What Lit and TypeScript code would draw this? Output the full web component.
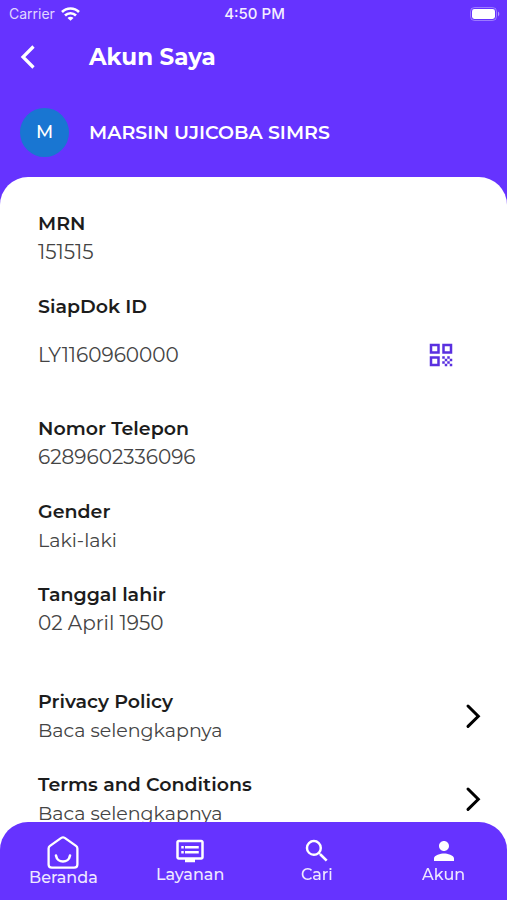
import { LitElement, html, css, svg, nothing } from "lit";
import { customElement, property } from "lit/decorators.js";

const icons = {
  back: svg`<svg class="icon" width="16" height="26" viewBox="0 0 16 26" fill="none" stroke="currentColor" stroke-width="3.2" stroke-linejoin="miter"><path d="M13.5 2.5 3 13l10.500 10.500"/></svg>`,
  next: svg`<svg class="icon" width="16" height="26" viewBox="0 0 16 26" fill="none" stroke="currentColor" stroke-width="3" stroke-linecap="round" stroke-linejoin="miter"><path d="M3 3l10.300 10.200L3 23.400"/></svg>`,
  wifi: svg`<svg class="icon" width="19" height="14" viewBox="0 0 19 14" fill="none" stroke="currentColor" stroke-width="2.6"><path d="M1 5a12 12 0 0 1 17 0"/><path d="M4 8.500a7.800 7.800 0 0 1 11 0"/><path d="M9.500 13.800 6.500 10.900a4.200 4.200 0 0 1 6 0z" fill="currentColor" stroke="none"/></svg>`,
  battery: svg`<svg class="icon" width="30" height="14" viewBox="0 0 30 14"><rect x="0.5" y="0.5" width="26" height="13" rx="4" fill="none" stroke="#fff" stroke-opacity=".35"/><rect x="2" y="2" width="23" height="10" rx="2.4" fill="#fff"/><path d="M28 4.600c1.800.9 1.800 3.900 0 4.800z" fill="#fff" fill-opacity=".5"/></svg>`,
  qr: svg`<svg class="icon" width="30" height="30" viewBox="0 0 24 24" fill="currentColor"><path d="M3 11h8V3H3v8zm2-6h4v4H5V5zM3 21h8v-8H3v8zm2-6h4v4H5v-4zM13 3v8h8V3h-8zm6 6h-4V5h4v4zM19 19h2v2h-2zM13 13h2v2h-2zM15 15h2v2h-2zM13 17h2v2h-2zM15 19h2v2h-2zM17 17h2v2h-2zM17 13h2v2h-2zM19 15h2v2h-2z"/></svg>`,
  home: svg`<svg class="icon" width="32" height="33" viewBox="0 0 32 34" preserveAspectRatio="none" fill="none" stroke="currentColor" stroke-width="2.3" stroke-linecap="round" stroke-linejoin="round"><path d="M14.300 1.900 3 10.200Q1.600 11.300 1.600 13v16.400q0 3.200 3.200 3.200h22.400q3.200 0 3.200-3.200V13q0-1.700-1.400-2.800L17.700 1.900q-1.700-1.100-3.400 0z"/><path d="M9 20.200c1.400 8.200 12.600 8.200 14 0" stroke-width="2.6"/></svg>`,
  service: svg`<svg class="icon" width="30" height="30" viewBox="0 0 24 24" fill="currentColor"><path d="M21 3H3c-1.100 0-2 .9-2 2v12c0 1.100.9 2 2 2h5v2h8v-2h5c1.100 0 2-.9 2-2V5c0-1.100-.9-2-2-2zm0 14H3V5h18v12zm-2-9H8v2h11V8zm0 4H8v2h11v-2zM7 8H5v2h2V8zm0 4H5v2h2v-2z"/></svg>`,
  search: svg`<svg class="icon" width="30" height="30" viewBox="0 0 24 24" fill="currentColor"><path d="M15.500 14h-.79l-.28-.27A6.471 6.471 0 0 0 16 9.500 6.500 6.500 0 1 0 9.500 16c1.610 0 3.090-.59 4.230-1.570l.27.28v.79l5 4.990L20.490 19l-4.990-5zm-6 0C7.010 14 5 11.990 5 9.500S7.010 5 9.500 5 14 7.010 14 9.500 11.990 14 9.500 14z"/></svg>`,
  person: svg`<svg class="icon" width="30" height="30" viewBox="0 0 24 24" fill="currentColor"><path d="M12 12c2.210 0 4-1.790 4-4s-1.790-4-4-4-4 1.790-4 4 1.790 4 4 4zm0 2c-2.670 0-8 1.340-8 4v2h16v-2c0-2.660-5.330-4-8-4z"/></svg>`,
};

const base = css`
  * { box-sizing: border-box; }
  .icon { display: block; flex: none; }
  button { border: 0; padding: 0; background: none; font: inherit; color: inherit; cursor: pointer; }
  a { color: inherit; text-decoration: none; }
`;

@customElement("status-bar")
class StatusBar extends LitElement {
  static styles = [base, css`
    :host {
      display: grid; grid-template-columns: 1fr auto 1fr; align-items: center;
      height: 27px; padding: 0 7px 0 9px;
      font-family: Inter, "Liberation Sans", sans-serif; font-size: 14px; line-height: 20px;
    }
    .carrier { display: flex; align-items: center; gap: 6px; color: #e0d6ff; }
    .carrier .icon { color: #fff; }
    .time { font-size: 15px; font-weight: 500; color: #f4eeff; }
    .power { justify-self: end; }
  `];
  render() {
    return html`
      <span class="carrier">Carrier ${icons.wifi}</span>
      <span class="time">4:50 PM</span>
      <span class="power">${icons.battery}</span>`;
  }
}

@customElement("profile-field")
class ProfileField extends LitElement {
  @property() label = "";
  @property() value = "";
  @property({ type: Boolean }) qr = false;
  static styles = [base, css`
    :host { display: block; }
    dl, dd { margin: 0; }
    dt { font-weight: 600; color: #1c1c1c; }
    dd { color: #444; }
    .numeric { font-size: 20px; }
    .tall { display: flex; align-items: center; justify-content: space-between; height: 68px; padding-right: 25px; }
    .code { color: #5a30e0; }
  `];
  render() {
    const size = /\d/.test(this.value) ? "numeric" : "";
    return html`<dl>
      <dt>${this.label}</dt>
      <dd class="${size} ${this.qr ? "tall" : ""}">
        <span>${this.value}</span>
        ${this.qr ? html`<button class="code" aria-label="QR">${icons.qr}</button>` : nothing}
      </dd>
    </dl>`;
  }
}

@customElement("profile-link")
class ProfileLink extends LitElement {
  @property() label = "";
  static styles = [base, css`
    :host { display: block; }
    .link { display: flex; align-items: center; justify-content: space-between; color: #000; }
    .title { display: block; font-weight: 600; color: #1c1c1c; }
    .more { display: block; color: #444; }
  `];
  render() {
    return html`<a class="link" href="#">
      <span><span class="title">${this.label}</span><span class="more">Baca selengkapnya</span></span>
      ${icons.next}
    </a>`;
  }
}

@customElement("tab-bar")
class TabBar extends LitElement {
  static styles = [base, css`
    :host { display: block; background: #6633ff; border-radius: 28px 28px 0 0; color: #fff; }
    .tabs { display: grid; grid-template-columns: repeat(4, 1fr); height: 78px; padding-top: 14px; }
    .tab { display: flex; flex-direction: column; align-items: center; color: #fff; }
    .caption { font-size: 16px; line-height: 18px; font-weight: 500; color: #efe8ff; }
  `];
  private tabs = [
    { label: "Beranda", icon: icons.home },
    { label: "Layanan", icon: icons.service },
    { label: "Cari", icon: icons.search },
    { label: "Akun", icon: icons.person },
  ];
  render() {
    return html`<nav class="tabs">
      ${this.tabs.map((t) => html`<a class="tab" href="#">${t.icon}<span class="caption">${t.label}</span></a>`)}
    </nav>`;
  }
}

@customElement("app-root")
class AppRoot extends LitElement {
  static styles = [base, css`
    :host {
      display: flex; flex-direction: column; height: 100vh; overflow: hidden;
      background: #6633ff; color: #fff;
      font-family: Montserrat, Inter, "Open Sans", sans-serif; font-size: 19px; line-height: 29px;
    }
    .bar { display: grid; grid-template-columns: 69px 1fr; align-items: center; height: 60px; padding: 0 20px; }
    .title { margin: 0; font-size: 23px; line-height: 30px; font-weight: 700; }
    .user { display: grid; grid-template-columns: 69px 1fr; align-items: center; height: 90px; padding: 1px 20px 0; }
    .avatar {
      display: grid; place-items: center; width: 49px; height: 49px; border-radius: 50%;
      background: #1976d2; font-size: 18px; font-weight: 500;
    }
    .name { margin: 0; font-size: 19px; font-weight: 600; }
    .sheet {
      flex: 1; min-height: 0; overflow-y: auto; scrollbar-width: none;
      background: #fff; border-radius: 28px 28px 0 0; padding: 32px 26px 28px 38px;
    }
    .group { display: flex; flex-direction: column; gap: 25px; }
    .links { margin-top: 49px; }
    .dock { z-index: 1; margin-top: -28px; }
  `];
  render() {
    return html`
      <status-bar></status-bar>
      <header class="bar">
        <button aria-label="Kembali">${icons.back}</button>
        <h1 class="title">Akun Saya</h1>
      </header>
      <section class="user">
        <span class="avatar">M</span>
        <h2 class="name">MARSIN UJICOBA SIMRS</h2>
      </section>
      <main class="sheet">
        <div class="group">
          <profile-field label="MRN" value="151515"></profile-field>
          <profile-field label="SiapDok ID" value="LY1160960000" qr></profile-field>
          <profile-field label="Nomor Telepon" value="6289602336096"></profile-field>
          <profile-field label="Gender" value="Laki-laki"></profile-field>
          <profile-field label="Tanggal lahir" value="02 April 1950"></profile-field>
        </div>
        <div class="group links">
          <profile-link label="Privacy Policy"></profile-link>
          <profile-link label="Terms and Conditions"></profile-link>
        </div>
      </main>
      <tab-bar class="dock"></tab-bar>`;
  }
}
